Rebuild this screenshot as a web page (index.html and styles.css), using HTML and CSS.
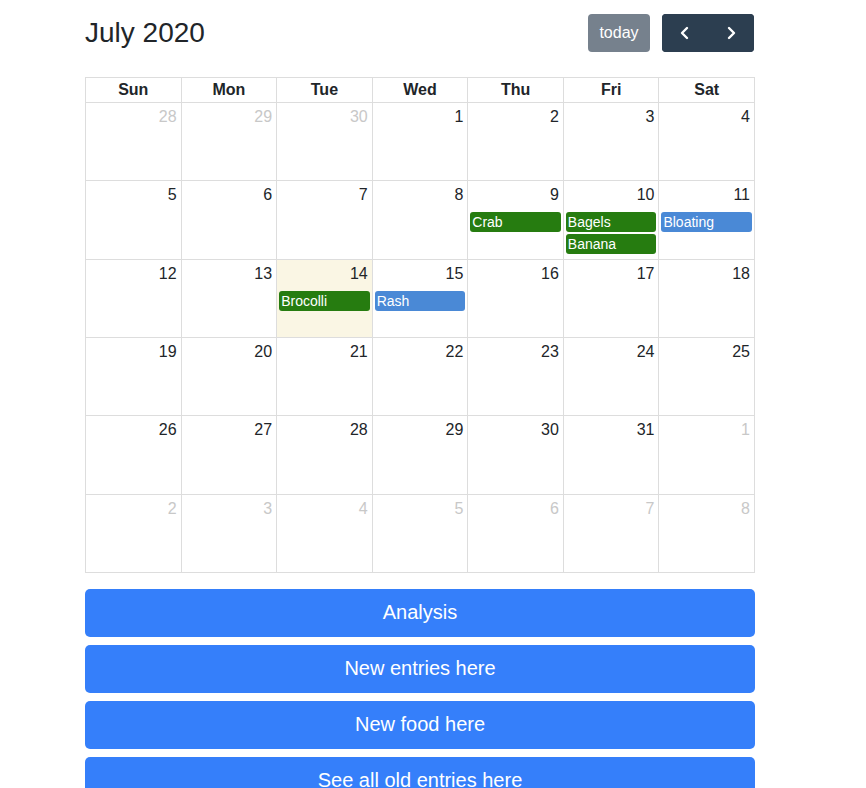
FILE: index.html
```html
<!DOCTYPE html>
<html>
<head>
<meta charset="utf-8">
<link rel="stylesheet" href="styles.css">
</head>
<body>
<div class="wrap">
  <div class="toolbar">
    <h2 class="title">July 2020</h2>
    <div class="tools">
      <button class="btn today">today</button>
      <div class="group">
        <button class="btn nav"><svg width="12" height="14" viewBox="0 0 12 14"><path d="M8 2 L3 7 L8 12" fill="none" stroke="#fff" stroke-width="2.4" stroke-linecap="round" stroke-linejoin="round"/></svg></button>
        <button class="btn nav"><svg width="12" height="14" viewBox="0 0 12 14"><path d="M4 2 L9 7 L4 12" fill="none" stroke="#fff" stroke-width="2.4" stroke-linecap="round" stroke-linejoin="round"/></svg></button>
      </div>
    </div>
  </div>
  <div class="cal">
    <div class="head">Sun</div><div class="head">Mon</div><div class="head">Tue</div><div class="head">Wed</div><div class="head">Thu</div><div class="head">Fri</div><div class="head">Sat</div>

    <div class="day other"><span class="num">28</span></div>
    <div class="day other"><span class="num">29</span></div>
    <div class="day other"><span class="num">30</span></div>
    <div class="day"><span class="num">1</span></div>
    <div class="day"><span class="num">2</span></div>
    <div class="day"><span class="num">3</span></div>
    <div class="day"><span class="num">4</span></div>

    <div class="day"><span class="num">5</span></div>
    <div class="day"><span class="num">6</span></div>
    <div class="day"><span class="num">7</span></div>
    <div class="day"><span class="num">8</span></div>
    <div class="day"><span class="num">9</span><div class="ev food">Crab</div></div>
    <div class="day"><span class="num">10</span><div class="ev food">Bagels</div><div class="ev food">Banana</div></div>
    <div class="day"><span class="num">11</span><div class="ev sym">Bloating</div></div>

    <div class="day"><span class="num">12</span></div>
    <div class="day"><span class="num">13</span></div>
    <div class="day today-cell"><span class="num">14</span><div class="ev food">Brocolli</div></div>
    <div class="day"><span class="num">15</span><div class="ev sym">Rash</div></div>
    <div class="day"><span class="num">16</span></div>
    <div class="day"><span class="num">17</span></div>
    <div class="day"><span class="num">18</span></div>

    <div class="day"><span class="num">19</span></div>
    <div class="day"><span class="num">20</span></div>
    <div class="day"><span class="num">21</span></div>
    <div class="day"><span class="num">22</span></div>
    <div class="day"><span class="num">23</span></div>
    <div class="day"><span class="num">24</span></div>
    <div class="day"><span class="num">25</span></div>

    <div class="day"><span class="num">26</span></div>
    <div class="day"><span class="num">27</span></div>
    <div class="day"><span class="num">28</span></div>
    <div class="day"><span class="num">29</span></div>
    <div class="day"><span class="num">30</span></div>
    <div class="day"><span class="num">31</span></div>
    <div class="day other"><span class="num">1</span></div>

    <div class="day other"><span class="num">2</span></div>
    <div class="day other"><span class="num">3</span></div>
    <div class="day other"><span class="num">4</span></div>
    <div class="day other"><span class="num">5</span></div>
    <div class="day other"><span class="num">6</span></div>
    <div class="day other"><span class="num">7</span></div>
    <div class="day other"><span class="num">8</span></div>
  </div>
  <div class="actions">
    <button class="big">Analysis</button>
    <button class="big">New entries here</button>
    <button class="big">New food here</button>
    <button class="big">See all old entries here</button>
  </div>
</div>
</body>
</html>
```

FILE: styles.css
```css
html, body { margin: 0; padding: 0; background: #fff; }
body { font-family: "Liberation Sans", Arial, sans-serif; color: #212529; }
.wrap { width: 670px; margin-left: 85px; padding-top: 14px; }
.toolbar { display: flex; justify-content: space-between; align-items: center; height: 38px; margin-bottom: 25px; }
.title { margin: 0; font-size: 28px; font-weight: 400; line-height: 40px; }
.tools { display: flex; gap: 12px; margin-right: 1px; }
.btn { border: 0; color: #fff; font-family: inherit; font-size: 16px; height: 38px; padding: 0; cursor: pointer; }
.today { background: #76818d; width: 62px; border-radius: 4px; }
.group { display: flex; border-radius: 4px; overflow: hidden; background: #2c3e50; }
.nav { background: #2c3e50; width: 46px; display: flex; align-items: center; justify-content: center; }
.cal { display: grid; grid-template-columns: repeat(7, 1fr); grid-template-rows: 25px repeat(6, 78.34px); border-top: 1px solid #ddd; border-left: 1px solid #ddd; }
.head { border-right: 1px solid #ddd; border-bottom: 1px solid #ddd; text-align: center; font-weight: 700; font-size: 16px; line-height: 24px; }
.day { border-right: 1px solid #ddd; border-bottom: 1px solid #ddd; display: flex; flex-direction: column; }
.num { align-self: flex-end; padding: 4px 4px 0 0; font-size: 16px; line-height: 19px; height: 28px; box-sizing: border-box; }
.other .num { color: #c8c8c8; }
.today-cell { background: #faf6e4; }
.ev { margin: 3px 2px 0 2px; height: 20px; box-sizing: border-box; border-radius: 3px; color: #fff; font-size: 14px; line-height: 20px; padding: 0 2px; white-space: nowrap; overflow: hidden; }
.ev + .ev { margin-top: 2px; }
.food { background: #267c10; }
.sym { background: #4a89d6; }
.actions { display: flex; flex-direction: column; gap: 8px; margin-top: 16px; }
.big { height: 48px; border: 0; border-radius: 5px; background: #357ffa; color: #fff; font-family: inherit; font-size: 20px; cursor: pointer; }
```
